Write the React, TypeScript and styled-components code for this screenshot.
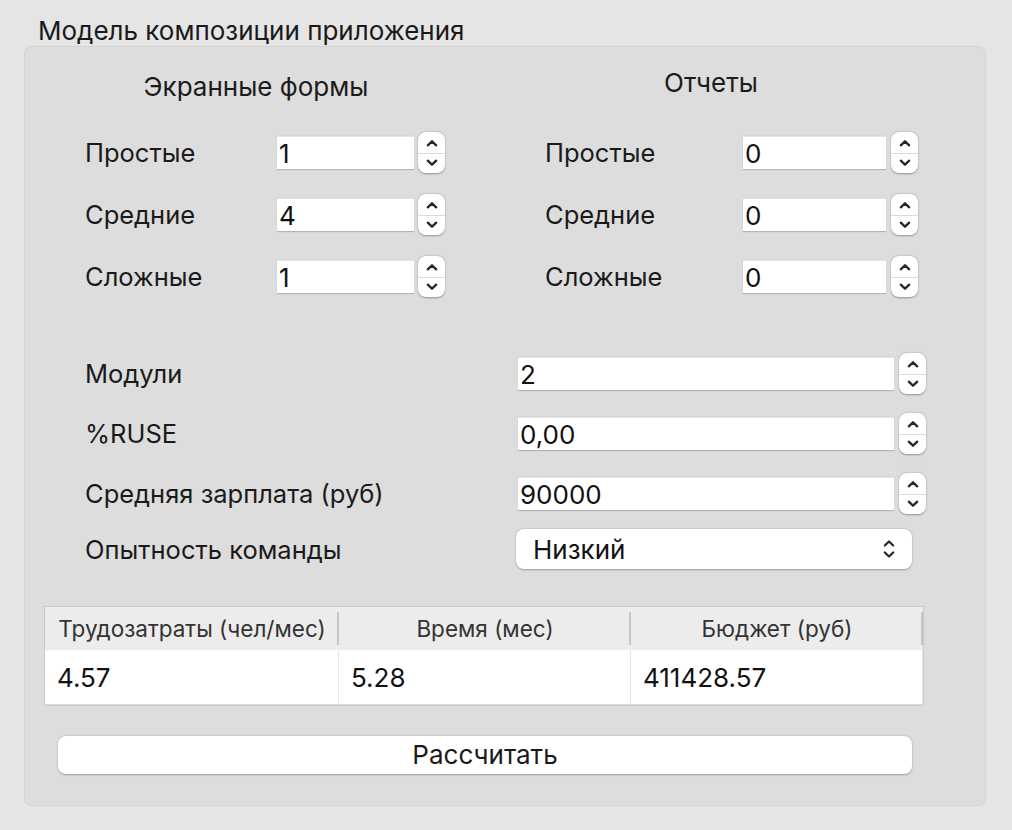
import React from 'react';
import styled, { createGlobalStyle } from 'styled-components';

const GlobalStyle = createGlobalStyle`
  html, body {
    margin: 0;
    padding: 0;
    background: #e5e5e5;
  }
  body {
    font-family: Inter, "Liberation Sans", sans-serif;
    color: #1b1b1b;
  }
`;

const Window = styled.div`
  width: 1012px;
  height: 830px;
  box-sizing: border-box;
  padding: 16px 26px 24px 24px;
  background: #e5e5e5;
`;

const GroupTitle = styled.div`
  margin-left: 14px;
  height: 30px;
  line-height: 30px;
  font-size: 26px;
  color: #1a1a1a;
`;

const GroupBox = styled.div`
  width: 962px;
  height: 760px;
  box-sizing: border-box;
  border: 1px solid #d4d4d4;
  border-radius: 7px;
  background: #dddddd;
  display: flex;
  flex-direction: column;
`;

const TopSection = styled.div`
  display: flex;
  gap: 100px;
  padding: 25px 0 0 60px;
`;

const FormColumn = styled.div<{ $width: number }>`
  width: ${(p) => p.$width}px;
  display: flex;
  flex-direction: column;
  gap: 21px;
`;

const ColumnHeader = styled.div<{ $width: number; $lift: number }>`
  width: ${(p) => p.$width}px;
  height: 30px;
  line-height: 30px;
  text-align: center;
  font-size: 26px;
  margin-top: ${(p) => -p.$lift}px;
  margin-bottom: ${(p) => 9 + p.$lift}px;
`;

const SpinRow = styled.div<{ $label: number; $input: number; $gap: number }>`
  display: grid;
  grid-template-columns: ${(p) => p.$label}px ${(p) => p.$input}px ${(p) => p.$gap}px 27px;
  align-items: center;
  height: 41px;
`;

const Label = styled.div`
  font-size: 25.5px;
  color: #1a1a1a;
  white-space: nowrap;
`;

const Field = styled.div`
  height: 34px;
  box-sizing: border-box;
  background: #ffffff;
  border-top: 1px solid #e3e3e3;
  border-bottom: 1px solid #b4b4b4;
  box-shadow: 0 0 0 0.5px #d2d2d2;
  padding-left: 2px;
  font-size: 26px;
  line-height: 33px;
  color: #111;
`;

const Stepper = styled.div`
  grid-column: 4;
  width: 27px;
  height: 41px;
  box-sizing: border-box;
  border-radius: 8px;
  background: #ffffff;
  box-shadow: 0 0.5px 2px rgba(0, 0, 0, 0.35);
  display: flex;
  flex-direction: column;
  align-items: center;
  justify-content: center;
`;

const StepHalf = styled.div<{ $divider?: boolean }>`
  width: 100%;
  height: 20px;
  display: flex;
  align-items: center;
  justify-content: center;
  border-top: ${(p) => (p.$divider ? '1px solid #dcdcdc' : 'none')};
  box-sizing: border-box;
`;

const BottomSection = styled.div`
  display: flex;
  flex-direction: column;
  gap: 19px;
  padding-left: 60px;
  margin-top: 56px;
`;

const ComboRow = styled.div`
  display: grid;
  grid-template-columns: 431px 396px;
  align-items: center;
  height: 40px;
  margin-top: -4px;
`;

const Combo = styled.div`
  height: 40px;
  box-sizing: border-box;
  border-radius: 8px;
  background: #ffffff;
  box-shadow: 0 0.5px 2px rgba(0, 0, 0, 0.3);
  display: flex;
  align-items: center;
  justify-content: space-between;
  padding: 0 17px 0 17px;
  font-size: 26px;
  color: #111;
`;

const Table = styled.div`
  margin: 37px 0 0 19px;
  width: 880px;
  height: 100px;
  box-sizing: border-box;
  border: 1px solid #c9c9c9;
  background: #ffffff;
  display: flex;
  flex-direction: column;
`;

const HeaderRow = styled.div`
  display: grid;
  grid-template-columns: 294px 292px 292px;
  height: 43px;
  background: #ececec;
`;

const HeaderCell = styled.div`
  display: flex;
  align-items: center;
  justify-content: center;
  font-size: 22.5px;
  color: #333;
  position: relative;
  &::after {
    content: '';
    position: absolute;
    right: 0;
    top: 5px;
    bottom: 5px;
    width: 2px;
    background: #c6c6c6;
  }
`;

const DataRow = styled.div`
  display: grid;
  grid-template-columns: 294px 292px 292px;
  height: 54px;
  border-bottom: 1px solid #dcdcdc;
`;

const DataCell = styled.div`
  display: flex;
  align-items: center;
  padding-left: 12px;
  font-size: 26px;
  color: #111;
  border-right: 1px solid #e6e6e6;
`;

const CalcButton = styled.button`
  margin: 30px 0 0 33px;
  width: 854px;
  height: 38px;
  border: none;
  border-radius: 8px;
  background: #ffffff;
  box-shadow: 0 0.5px 2px rgba(0, 0, 0, 0.3);
  font-family: Inter, "Liberation Sans", sans-serif;
  font-size: 26px;
  line-height: 38px;
  color: #1a1a1a;
  padding: 0;
`;

const Chevron = ({ up }: { up?: boolean }) => (
  <svg width="12" height="8" viewBox="0 0 12 8">
    <path
      d={up ? 'M1.8 6.3 L6 2.3 L10.2 6.3' : 'M1.8 1.7 L6 5.7 L10.2 1.7'}
      fill="none"
      stroke="#262626"
      strokeWidth="2.3"
      strokeLinecap="round"
      strokeLinejoin="round"
    />
  </svg>
);

const SpinButtons = () => (
  <Stepper>
    <StepHalf>
      <Chevron up />
    </StepHalf>
    <StepHalf $divider>
      <Chevron />
    </StepHalf>
  </Stepper>
);

const UpDownIcon = () => (
  <svg width="12" height="22" viewBox="0 0 12 22">
    <path
      d="M1.8 7.5 L6 3.5 L10.2 7.5 M1.8 14.5 L6 18.5 L10.2 14.5"
      fill="none"
      stroke="#262626"
      strokeWidth="2.2"
      strokeLinecap="round"
      strokeLinejoin="round"
    />
  </svg>
);

const screenForms = [
  { label: 'Простые', value: '1' },
  { label: 'Средние', value: '4' },
  { label: 'Сложные', value: '1' },
];

const reports = [
  { label: 'Простые', value: '0' },
  { label: 'Средние', value: '0' },
  { label: 'Сложные', value: '0' },
];

const params = [
  { label: 'Модули', value: '2' },
  { label: '%RUSE', value: '0,00' },
  { label: 'Средняя зарплата (руб)', value: '90000' },
];

const results = [
  { title: 'Трудозатраты (чел/мес)', value: '4.57' },
  { title: 'Время (мес)', value: '5.28' },
  { title: 'Бюджет (руб)', value: '411428.57' },
];

const App = () => {
  return (
    <Window>
      <GlobalStyle />
      <GroupTitle>Модель композиции приложения</GroupTitle>
      <GroupBox>
        <TopSection>
          <FormColumn $width={360}>
            <ColumnHeader $width={342} $lift={0}>
              Экранные формы
            </ColumnHeader>
            {screenForms.map((item) => (
              <SpinRow key={item.label} $label={192} $input={137} $gap={4}>
                <Label>{item.label}</Label>
                <Field>{item.value}</Field>
                <SpinButtons />
              </SpinRow>
            ))}
          </FormColumn>
          <FormColumn $width={372}>
            <ColumnHeader $width={332} $lift={4}>
              Отчеты
            </ColumnHeader>
            {reports.map((item) => (
              <SpinRow key={item.label} $label={198} $input={143} $gap={5}>
                <Label>{item.label}</Label>
                <Field>{item.value}</Field>
                <SpinButtons />
              </SpinRow>
            ))}
          </FormColumn>
        </TopSection>

        <BottomSection>
          {params.map((item) => (
            <SpinRow key={item.label} $label={433} $input={376} $gap={5}>
              <Label>{item.label}</Label>
              <Field>{item.value}</Field>
              <SpinButtons />
            </SpinRow>
          ))}
          <ComboRow>
            <Label>Опытность команды</Label>
            <Combo>
              <span>Низкий</span>
              <UpDownIcon />
            </Combo>
          </ComboRow>
        </BottomSection>

        <Table>
          <HeaderRow>
            {results.map((r) => (
              <HeaderCell key={r.title}>{r.title}</HeaderCell>
            ))}
          </HeaderRow>
          <DataRow>
            {results.map((r) => (
              <DataCell key={r.title}>{r.value}</DataCell>
            ))}
          </DataRow>
        </Table>

        <CalcButton>Рассчитать</CalcButton>
      </GroupBox>
    </Window>
  );
};

export default App;
